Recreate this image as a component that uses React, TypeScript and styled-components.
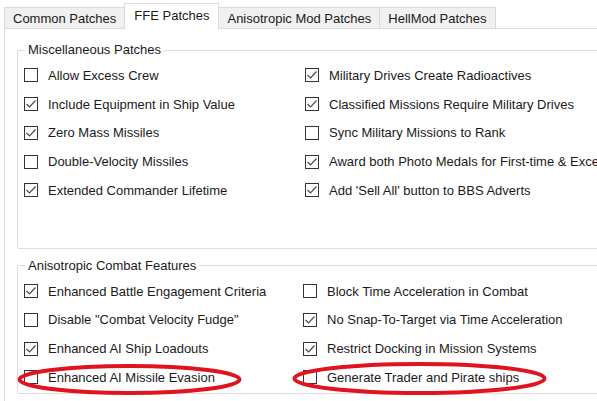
import React from 'react'
import styled, { createGlobalStyle } from 'styled-components'

const GlobalStyle = createGlobalStyle`
  body {
    margin: 0;
    background: #ffffff;
    overflow: hidden;
    font-family: 'Liberation Sans', Arial, sans-serif;
    color: #1a1a1a;
  }
`

const Window = styled.div`
  position: relative;
  width: 640px;
  height: 401px;
  padding: 3px 0 0 4px;
  box-sizing: border-box;
  overflow: hidden;
`

const TabStrip = styled.div`
  display: flex;
  align-items: flex-end;
  height: 25px;
  position: relative;
  z-index: 1;
`

const Tab = styled.div<{ $active?: boolean }>`
  display: flex;
  align-items: center;
  box-sizing: border-box;
  height: ${({ $active }) => ($active ? '26px' : '21px')};
  margin-bottom: ${({ $active }) => ($active ? '-1px' : '0')};
  padding: ${({ $active }) => ($active ? '0 9px 3px 9px' : '0 8px')};
  border: 1px solid #d9d9d9;
  border-bottom: none;
  margin-left: -1px;
  background: ${({ $active }) => ($active ? '#ffffff' : '#f0f0f0')};
  font-size: 13px;
  white-space: nowrap;
  &:first-child {
    margin-left: 0;
  }
`

const Panel = styled.div`
  border: 1px solid #d9d9d9;
  background: #ffffff;
  padding: 13px 0 20px 12px;
  height: 420px;
`

const Group = styled.fieldset<{ $gapAbove?: number; $spaceBelow?: number }>`
  margin: ${({ $gapAbove }) => $gapAbove || 0}px 0 0 0;
  padding: 0 0 ${({ $spaceBelow }) => $spaceBelow || 0}px 6px;
  border: 1px solid #dcdcdc;
  border-radius: 2px;
  width: 640px;
`

const Legend = styled.legend`
  margin-left: 1px;
  padding: 0 3px;
  font-size: 13px;
  line-height: 16px;
`

const Grid = styled.div<{ $split: number }>`
  display: grid;
  grid-template-columns: ${({ $split }) => $split}px 1fr;
  grid-auto-rows: 28.75px;
  padding-top: 3px;
`

const Row = styled.label`
  display: flex;
  align-items: center;
  gap: 10px;
  font-size: 13px;
  white-space: nowrap;
`

const Box = styled.span`
  display: flex;
  align-items: center;
  justify-content: center;
  flex: none;
  width: 14px;
  height: 14px;
  box-sizing: border-box;
  border: 1px solid #333333;
  background: #ffffff;
`

const Annotation = styled.svg`
  position: absolute;
  left: 0;
  top: 0;
  pointer-events: none;
`

const Check: React.FC<{ checked: boolean }> = ({ checked }) => (
  <Box>
    {checked && (
      <svg width="12" height="12" viewBox="0 0 12 12">
        <polyline points="1.5,6 4.5,9 10.5,2.5" fill="none" stroke="#4a4a4a" strokeWidth="1.2" />
      </svg>
    )}
  </Box>
)

type Item = [string, boolean]

const misc: Item[] = [
  ['Allow Excess Crew', false],
  ['Military Drives Create Radioactives', true],
  ['Include Equipment in Ship Value', true],
  ['Classified Missions Require Military Drives', true],
  ['Zero Mass Missiles', true],
  ['Sync Military Missions to Rank', false],
  ['Double-Velocity Missiles', false],
  ['Award both Photo Medals for First-time & Exceptional', true],
  ['Extended Commander Lifetime', true],
  ["Add 'Sell All' button to BBS Adverts", true],
]

const combat: Item[] = [
  ['Enhanced Battle Engagement Criteria', true],
  ['Block Time Acceleration in Combat', false],
  ['Disable "Combat Velocity Fudge"', false],
  ['No Snap-To-Target via Time Acceleration', true],
  ['Enhanced AI Ship Loadouts', true],
  ['Restrict Docking in Mission Systems', true],
  ['Enhanced AI Missile Evasion', false],
  ['Generate Trader and Pirate ships', false],
]

const tabs = ['Common Patches', 'FFE Patches', 'Anisotropic Mod Patches', 'HellMod Patches']

export default function App() {
  return (
    <Window>
      <GlobalStyle />
      <TabStrip>
        {tabs.map((t) => (
          <Tab key={t} $active={t === 'FFE Patches'}>
            {t}
          </Tab>
        ))}
      </TabStrip>
      <Panel>
        <Group $spaceBelow={43}>
          <Legend>Miscellaneous Patches</Legend>
          <Grid $split={281}>
            {misc.map(([label, on]) => (
              <Row key={label}>
                <Check checked={on} />
                {label}
              </Row>
            ))}
          </Grid>
        </Group>
        <Group $gapAbove={9} $spaceBelow={1}>
          <Legend>Anisotropic Combat Features</Legend>
          <Grid $split={279}>
            {combat.map(([label, on]) => (
              <Row key={label}>
                <Check checked={on} />
                {label}
              </Row>
            ))}
          </Grid>
        </Group>
      </Panel>
      <Annotation width="597" height="401">
        <ellipse cx="129.5" cy="379.5" rx="110" ry="13.5" fill="none" stroke="#e0141e" strokeWidth="4" />
        <ellipse cx="419.5" cy="378.5" rx="125" ry="14.5" fill="none" stroke="#e0141e" strokeWidth="4" />
      </Annotation>
    </Window>
  )
}
